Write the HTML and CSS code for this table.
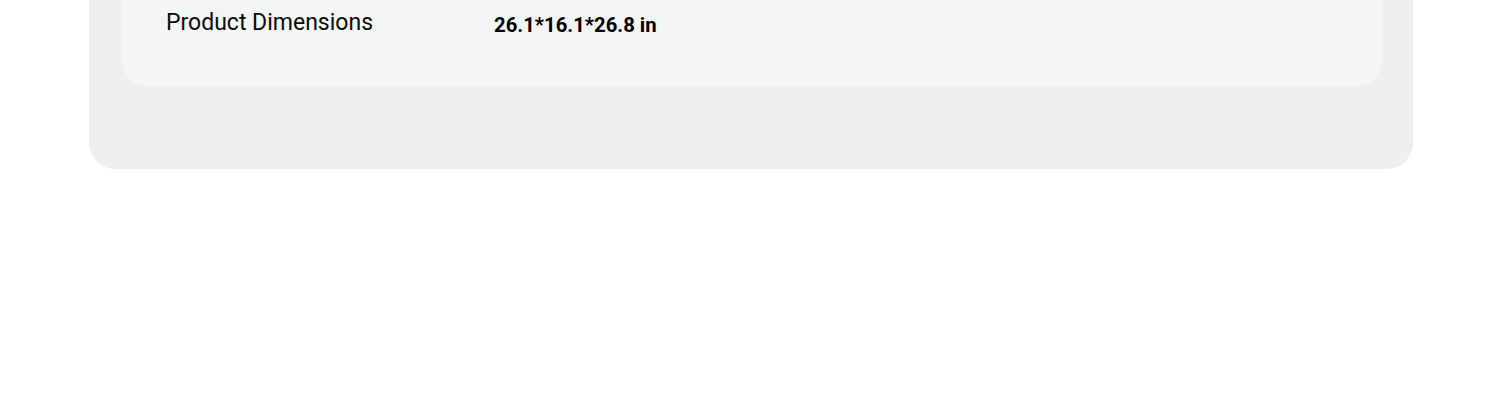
FILE: index.html
```html
<!DOCTYPE html>
<html lang="en">
<head>
    <meta charset="UTF-8">
    <meta name="viewport" content="width=device-width, initial-scale=1.0">
    <title>Specifications</title>
    <link rel="stylesheet" href="styles.css">
</head>
<body>
    <div class="spec-card">
        <div class="spec-table">
            <div class="spec-row">
                <span class="spec-label">Product Dimensions</span>
                <span class="spec-value">26.1*16.1*26.8 in</span>
            </div>
        </div>
    </div>
</body>
</html>
```

FILE: styles.css
```css
/* page */
body {
    margin: 0;
    padding: 0;
    background-color: #fff;
    font-family: Roboto, "Liberation Sans", sans-serif;
    color: #0a0a0a;
    overflow: hidden;
}

/* outer card, scrolled so its top is out of view */
.spec-card {
    width: 1324px;
    margin: -100px 0 0 89px;
    padding: 0 31px 83px 33px;
    box-sizing: border-box;
    background-color: #eeeeee;
    border-radius: 26px;
}

.spec-table {
    background-color: #f4f5f5;
    border-radius: 26px;
    padding: 0 0 40px 44px;
}

.spec-row {
    display: flex;
    height: 146px;
}

.spec-label {
    width: 312px;
    padding-top: 108px;
    font-size: 23px;
    line-height: 30px;
}

.spec-value {
    width: 446px;
    padding: 110px 0 0 16px;
    font-size: 20.3px;
    font-weight: bold;
    line-height: 30px;
    color: #000;
    background-color: #f3f4f4;
}
```
